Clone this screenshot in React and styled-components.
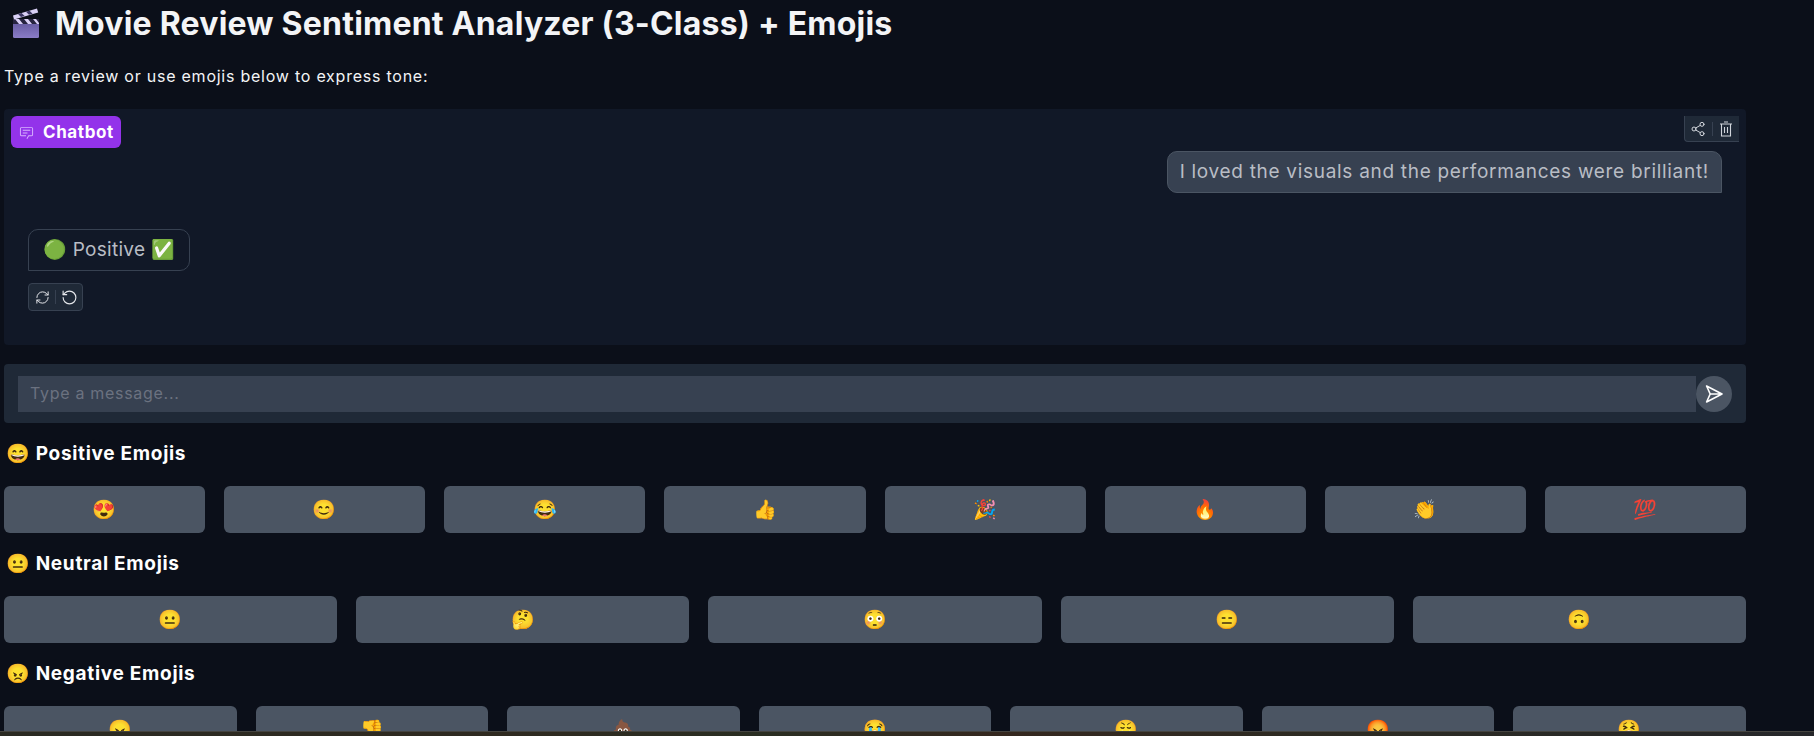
import React from 'react';
import styled, { createGlobalStyle } from 'styled-components';
import { RefreshCw, RotateCcw, Share2 } from 'lucide-react';

const FONT = 'Inter, "Noto Sans", "Noto Color Emoji", sans-serif';

const Global = createGlobalStyle`
  html, body { margin: 0; height: 100%; background: #0b0f19; overflow: hidden; }
  * { box-sizing: border-box; }
`;

const positive = ['😍', '😊', '😂', '👍', '🎉', '🔥', '👏', '💯'];
const neutral = ['😐', '🤔', '😳', '😑', '🙃'];
const negative = ['😠', '👎', '💩', '😭', '😤', '😡', '😫'];

function Clapper() {
  return (
    <svg width="28" height="32" viewBox="0 0 28 32">
      <defs>
        <linearGradient id="clapBody" x1="0" y1="0" x2="0" y2="1">
          <stop offset="0" stopColor="#5d5398" />
          <stop offset="1" stopColor="#8a7cc6" />
        </linearGradient>
      </defs>
      <rect x="1" y="12" width="26" height="19" rx="1.5" fill="url(#clapBody)" />
      <rect x="1" y="12" width="26" height="5" fill="#26233f" />
      <path d="M3 12l4 5h4l-4-5zM12 12l4 5h4l-4-5zM21 12l4 5h2v-1l-3-4z" fill="#d9d0f5" />
      <path d="M1 8.5L25 1.5l1.2 4L2 12.5z" fill="#d9d0f5" />
      <path d="M6 7l3 3 3.6-1-3-3zM14 4.7l3 3 3.6-1-3-3z" fill="#3a3560" />
    </svg>
  );
}

function ChatIcon() {
  return (
    <svg width="15" height="15" viewBox="0 0 32 32" fill="currentColor">
      <path d="M17.74 30L16 29l4-7h6a2 2 0 0 0 2-2V8a2 2 0 0 0-2-2H6a2 2 0 0 0-2 2v12a2 2 0 0 0 2 2h9v2H6a4 4 0 0 1-4-4V8a4 4 0 0 1 4-4h20a4 4 0 0 1 4 4v12a4 4 0 0 1-4 4h-4.84Z" />
      <path d="M8 10h16v2H8zm0 6h10v2H8z" />
    </svg>
  );
}

function TrashIcon() {
  return (
    <svg width="14" height="16" viewBox="0 0 14 16" fill="none" stroke="currentColor" strokeWidth="1.1">
      <path d="M1 3h12M5 1h4M2.5 3v12h9V3M5.5 6v6M8.5 6v6" />
    </svg>
  );
}

function SendIcon() {
  return (
    <svg width="18" height="18" viewBox="0 0 18 18" fill="none" stroke="#fff" strokeWidth="1.6" strokeLinejoin="round">
      <path d="M1.6 1L17 9 1.6 17l3.6-8zM5.2 9H17" />
    </svg>
  );
}

const Page = styled.div`
  height: 736px;
  display: flex;
  flex-direction: column;
  background: #0b0f19;
  color: #fff;
  font-family: ${FONT};
`;

const Content = styled.main`
  flex: 1;
  min-height: 0;
  overflow: hidden;
  width: 1746px;
  padding-left: 4px;
`;

const BottomBar = styled.div`
  height: 5px;
  flex: none;
  border-top: 1px solid #45443f;
  background: linear-gradient(90deg, #2a2a22, #2f2a20 28%, #2a2e22 42%, #35281f 55%, #2c2b23 75%, #26272a);
`;

const Title = styled.h1`
  display: flex;
  align-items: center;
  gap: 15px;
  height: 46px;
  margin: 0;
  padding-left: 8px;
  font-size: 32px;
  font-weight: 700;
  letter-spacing: 0.22px;
  color: #f3f4f6;
  white-space: nowrap;
`;

const Subtitle = styled.p`
  margin: 21px 0 23px;
  height: 19px;
  line-height: 19px;
  font-size: 16px;
  letter-spacing: 0.76px;
  color: #f3f4f6;
`;

const ChatPanel = styled.section`
  position: relative;
  height: 236px;
  padding: 42px 24px 0;
  display: flex;
  flex-direction: column;
  background: #111827;
  border-radius: 4px;
`;

const Badge = styled.div`
  position: absolute;
  top: 7px;
  left: 7px;
  display: flex;
  align-items: center;
  gap: 9px;
  width: 110px;
  height: 32px;
  padding-left: 8px;
  background: #9333ea;
  border-radius: 6px;
  font-size: 17px;
  font-weight: 700;
  letter-spacing: 0.6px;
  svg { color: #d8b4fe; }
`;

const Toolbar = styled.div`
  position: absolute;
  top: 7px;
  right: 7px;
  display: flex;
  align-items: center;
  width: 55px;
  height: 26px;
  color: #d1d5db;
  background: #1f2937;
  border-bottom: 1px solid #374151;
  border-left: 1px solid #374151;
  border-bottom-left-radius: 4px;
`;

const ToolButton = styled.span`
  flex: 1;
  display: flex;
  align-items: center;
  justify-content: center;
  height: 14px;
  & + & { border-left: 1px solid #374151; }
`;

const Bubble = styled.div`
  display: flex;
  align-items: center;
  height: 42px;
  padding-bottom: 2px;
  font-size: 19px;
  color: #b9bdc5;
  border-radius: 10px;
  white-space: nowrap;
`;

const UserBubble = styled(Bubble)`
  align-self: flex-end;
  padding-left: 12px;
  padding-right: 12px;
  letter-spacing: 0.7px;
  background: #374151;
  border: 1px solid #4b5563;
  border-bottom-right-radius: 0;
`;

const BotBubble = styled(Bubble)`
  align-self: flex-start;
  gap: 6px;
  margin-top: 36px;
  padding-left: 14px;
  padding-right: 14px;
  letter-spacing: 0.3px;
  border: 1px solid #374151;
  border-bottom-left-radius: 0;
`;

const Glyph = styled.span`
  font-size: 19px;
  line-height: 1;
  letter-spacing: 0;
`;

const Actions = styled.div`
  display: flex;
  align-items: center;
  align-self: flex-start;
  width: 55px;
  height: 28px;
  margin-top: 12px;
  color: #e5e7eb;
  background: #1f2937;
  border: 1px solid #374151;
  border-radius: 4px;
`;

const ActionButton = styled.span`
  flex: 1;
  display: flex;
  align-items: center;
  justify-content: center;
  height: 14px;
  & + & { border-left: 1px solid #374151; }
`;

const InputRow = styled.form`
  display: flex;
  height: 59px;
  margin: 19px 0 20px;
  padding: 12px 14px 11px;
  background: #1f2937;
  border-radius: 4px;
`;

const MessageInput = styled.input`
  flex: 1;
  height: 36px;
  padding: 0 12px 2px;
  border: 0;
  outline: 0;
  color: #e5e7eb;
  background: #374151;
  font: 400 16px ${FONT};
  letter-spacing: 0.7px;
  &::placeholder { color: #6b7280; opacity: 1; }
`;

const SendButton = styled.button`
  display: flex;
  align-items: center;
  justify-content: center;
  width: 36px;
  height: 36px;
  padding: 0;
  border: 0;
  border-radius: 50%;
  background: #4b5563;
`;

const Heading = styled.h3`
  display: flex;
  align-items: center;
  gap: 6px;
  height: 20px;
  margin: 0 0 23px;
  padding-left: 2px;
  font-size: 19px;
  font-weight: 700;
  letter-spacing: 0.7px;
`;

const EmojiRow = styled.div`
  display: grid;
  grid-template-columns: repeat(${(p) => p.$count}, 1fr);
  gap: 19px;
  margin-bottom: 20px;
`;

const EmojiButton = styled.button`
  height: 47px;
  padding: 0;
  border: 0;
  border-radius: 6px;
  background: #4b5563;
  font-size: 19px;
  font-family: ${FONT};
`;

function Section({ icon, label, items }) {
  return (
    <>
      <Heading><Glyph>{icon}</Glyph>{label}</Heading>
      <EmojiRow $count={items.length}>
        {items.map((e) => <EmojiButton key={e} type="button">{e}</EmojiButton>)}
      </EmojiRow>
    </>
  );
}

export default function App() {
  return (
    <Page>
      <Global />
      <Content>
        <Title><Clapper />Movie Review Sentiment Analyzer (3-Class) + Emojis</Title>
        <Subtitle>Type a review or use emojis below to express tone:</Subtitle>

        <ChatPanel>
          <Badge><ChatIcon />Chatbot</Badge>
          <Toolbar>
            <ToolButton><Share2 size={16} strokeWidth={1.5} /></ToolButton>
            <ToolButton><TrashIcon /></ToolButton>
          </Toolbar>
          <UserBubble>I loved the visuals and the performances were brilliant!</UserBubble>
          <BotBubble><Glyph>🟢</Glyph>Positive<Glyph>✅</Glyph></BotBubble>
          <Actions>
            <ActionButton><RefreshCw size={15} strokeWidth={1.6} /></ActionButton>
            <ActionButton><RotateCcw size={17} strokeWidth={1.6} /></ActionButton>
          </Actions>
        </ChatPanel>

        <InputRow>
          <MessageInput placeholder="Type a message..." />
          <SendButton type="button"><SendIcon /></SendButton>
        </InputRow>

        <Section icon="😄" label="Positive Emojis" items={positive} />
        <Section icon="😐" label="Neutral Emojis" items={neutral} />
        <Section icon="😠" label="Negative Emojis" items={negative} />
      </Content>
      <BottomBar />
    </Page>
  );
}
